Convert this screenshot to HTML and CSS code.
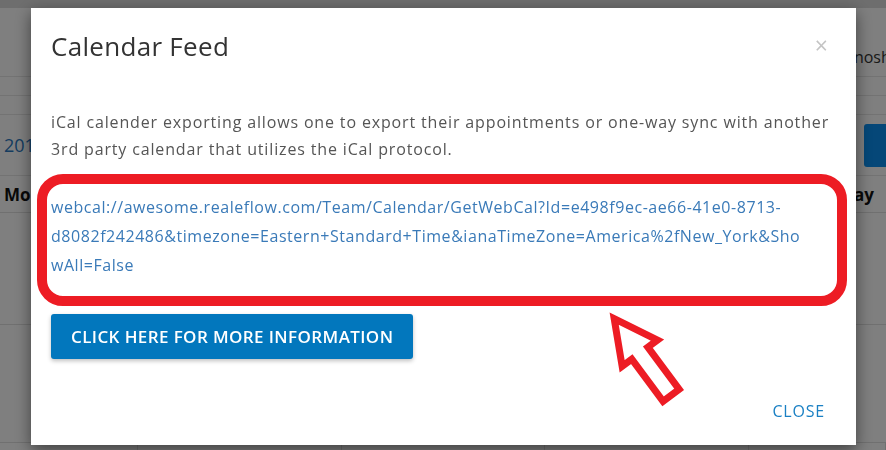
FILE: index.html
```html
<!DOCTYPE html>
<html lang="en">
<head>
    <meta charset="UTF-8">
    <meta name="viewport" content="width=device-width, initial-scale=1.0">
    <title>Calendar Feed</title>
    <link rel="stylesheet" href="styles.css">
</head>
<body>
    <div class="page">
        <div class="topbar"></div>
        <div class="userbar"><span class="user">Enosh</span></div>
        <div class="subnav"></div>
        <div class="subnav"></div>
        <div class="toolbar">
            <a class="range">2019</a>
            <span class="today-btn"></span>
        </div>
        <div class="cal-head">
            <span>Monday</span>
            <span>Sunday</span>
        </div>
        <div class="cal-row week1"></div>
        <div class="cal-row week2"></div>
        <div class="cal-row nums">
            <div class="cell">10</div>
            <div class="cell">11</div>
            <div class="cell">12</div>
            <div class="cell">13</div>
            <div class="cell"></div>
        </div>
    </div>

    <div class="backdrop">
        <div class="modal">
            <div class="modal-header">
                <h4 class="modal-title">Calendar Feed</h4>
                <span class="close-x">&times;</span>
            </div>
            <div class="modal-body">
                <p class="intro">iCal calender exporting allows one to export their appointments or one-way sync with another 3rd party calendar that utilizes the iCal protocol.</p>
                <div class="feed-box">
                    <a class="feed-link">webcal://awesome.realeflow.com/Team/Calendar/GetWebCal?Id=e498f9ec-ae66-41e0-8713-<br>d8082f242486&amp;timezone=Eastern+Standard+Time&amp;ianaTimeZone=America%2fNew_York&amp;Sho<br>wAll=False</a>
                </div>
                <button class="info-btn">Click here for more information</button>
            </div>
            <div class="modal-footer">
                <a class="close-link">Close</a>
            </div>

            <!-- annotation arrow pointing at the feed url -->
            <svg class="arrow" width="110" height="120" viewBox="0 0 110 120">
                <polygon transform="translate(10,8) rotate(-36.6)"
                    points="0,7 22,50 10,50 10,102.5 -10,102.5 -10,50 -22,50"
                    fill="#fff" stroke="#ed1c24" stroke-width="7" stroke-linejoin="miter" />
            </svg>
        </div>
    </div>
</body>
</html>
```

FILE: styles.css
```css
body {
    margin: 0;
    font-family: 'Open Sans', 'Liberation Sans', sans-serif;
    background: #fff;
    color: #222;
    overflow: hidden;
}

/* page under the dialog */
.page {
    width: 886px;
    height: 450px;
    overflow: hidden;
}
.topbar {
    height: 8px;
    background: #dcdcdc;
}
.userbar {
    height: 68px;
    border-bottom: 1px solid #e6e6e6;
    padding-left: 845px;
    box-sizing: content-box;
}
.user {
    display: inline-block;
    margin-top: 38px;
    font-size: 16px;
    white-space: nowrap;
    color: #333;
}
.subnav {
    height: 18px;
    border-bottom: 1px solid #e6e6e6;
}
.toolbar {
    height: 60px;
    border-bottom: 1px solid #e6e6e6;
    display: flex;
    align-items: center;
    justify-content: space-between;
}
.range {
    padding-left: 4px;
    font-size: 18px;
    color: #2a78c0;
}
.today-btn {
    width: 22px;
    height: 43px;
    background: #0a8ff0;
    border-radius: 3px 0 0 3px;
}
.cal-head {
    height: 36px;
    border-bottom: 1px solid #e0e0e0;
    display: flex;
    align-items: center;
    justify-content: space-between;
    padding: 0 0 0 4px;
    font-weight: 700;
    font-size: 17px;
    color: #111;
}
.cal-head span:last-child {
    margin-right: 12px;
}
.cal-row {
    border-bottom: 1px solid #e0e0e0;
}
.week1 { height: 111px; }
.week2 { height: 117px; }
.nums {
    display: grid;
    grid-template-columns: 138px 204px 203px 204px 1fr;
    height: 40px;
}
.nums .cell {
    border-right: 1px solid #e0e0e0;
    text-align: right;
    padding: 1px 10px 0 0;
    font-size: 15px;
    font-weight: 700;
    color: #222;
}

/* dialog */
.backdrop {
    position: fixed;
    inset: 0;
    background: rgba(0, 0, 0, 0.5);
}
.modal {
    position: relative;
    margin: 8px 0 0 31px;
    width: 825px;
    height: 437px;
    background: #fff;
    box-shadow: 0 5px 15px rgba(0, 0, 0, 0.5);
    box-sizing: border-box;
    display: flex;
    flex-direction: column;
}
.modal-header {
    display: flex;
    justify-content: space-between;
    padding: 23px 20px 0 20px;
}
.modal-title {
    margin: 0;
    font-size: 26px;
    font-weight: 400;
    line-height: 30px;
    letter-spacing: 0.3px;
    color: #333;
}
.close-x {
    font-size: 23px;
    line-height: 26px;
    color: #c4c4c4;
    margin: 1px 8px 0 0;
}
.modal-body {
    padding: 0 20px;
    flex: 1;
}
.intro {
    margin: 48px 0 11px;
    font-size: 16px;
    line-height: 27px;
    letter-spacing: 0.85px;
    color: #555;
}
.feed-box {
    margin: 0 -11px 0 -14px;
    border: 10px solid #ed1c24;
    border-radius: 26px;
    padding: 9px 1px 16px 4px;
}
.feed-link {
    display: block;
    font-size: 16px;
    line-height: 29px;
    letter-spacing: 0.55px;
    color: #3a7ab8;
    white-space: nowrap;
}
.info-btn {
    margin-top: 8px;
    height: 45px;
    padding: 0 20px;
    border: none;
    border-radius: 3px;
    background: #0277bd;
    box-shadow: 0 2px 4px rgba(0, 0, 0, 0.25);
    color: #fff;
    font-family: inherit;
    font-size: 17px;
    font-weight: 600;
    letter-spacing: 0.4px;
    text-transform: uppercase;
}
.modal-footer {
    display: flex;
    justify-content: flex-end;
    padding: 0 31px 24px 0;
}
.close-link {
    font-size: 16px;
    line-height: 20px;
    letter-spacing: 0.8px;
    color: #1a80c4;
    text-transform: uppercase;
}
.arrow {
    position: absolute;
    left: 569px;
    top: 297px;
}
```
